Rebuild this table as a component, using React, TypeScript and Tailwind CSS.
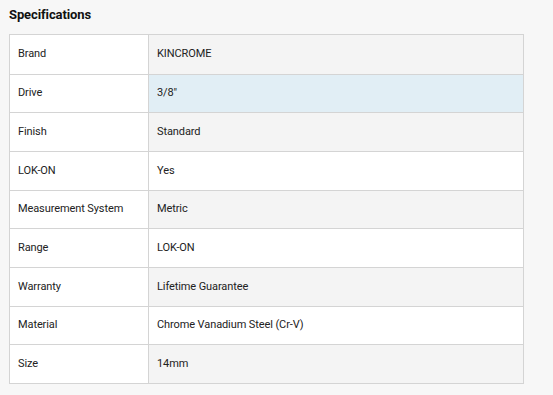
const specs = [
  { label: "Brand", value: "KINCROME" },
  { label: "Drive", value: "3/8\"" },
  { label: "Finish", value: "Standard" },
  { label: "LOK-ON", value: "Yes" },
  { label: "Measurement System", value: "Metric" },
  { label: "Range", value: "LOK-ON" },
  { label: "Warranty", value: "Lifetime Guarantee" },
  { label: "Material", value: "Chrome Vanadium Steel (Cr-V)" },
  { label: "Size", value: "14mm" },
];

export default function App() {
  return (
    <div className="w-[553px] h-[395px] bg-[#f7f7f7] pl-[9px] pt-[6px] text-[#222] font-['Roboto',sans-serif]">
      {/* Title */}
      <h2 className="font-bold text-[13px] leading-[18px] tracking-[-0.1px] text-[#111]">Specifications</h2>

      {/* Spec table */}
      <div className="mt-[10px] w-[515px] border border-[#d4d4d4] bg-white">
        {specs.map((row, i) => {
          const valueBg = i === 1 ? "bg-[#e1eef5]" : i % 2 === 0 ? "bg-[#f4f4f4]" : "bg-white";
          return (
            <div key={i} className={`flex h-[38.67px] text-[11px] tracking-[-0.1px] ${i > 0 ? "border-t border-[#d4d4d4]" : ""}`}>
              <div className="w-[139px] shrink-0 flex items-center px-[8px] border-r border-[#d4d4d4] bg-white">
                {row.label}
              </div>
              <div className={`flex-1 flex items-center px-[8px] ${valueBg}`}>{row.value}</div>
            </div>
          );
        })}
      </div>
    </div>
  );
}
